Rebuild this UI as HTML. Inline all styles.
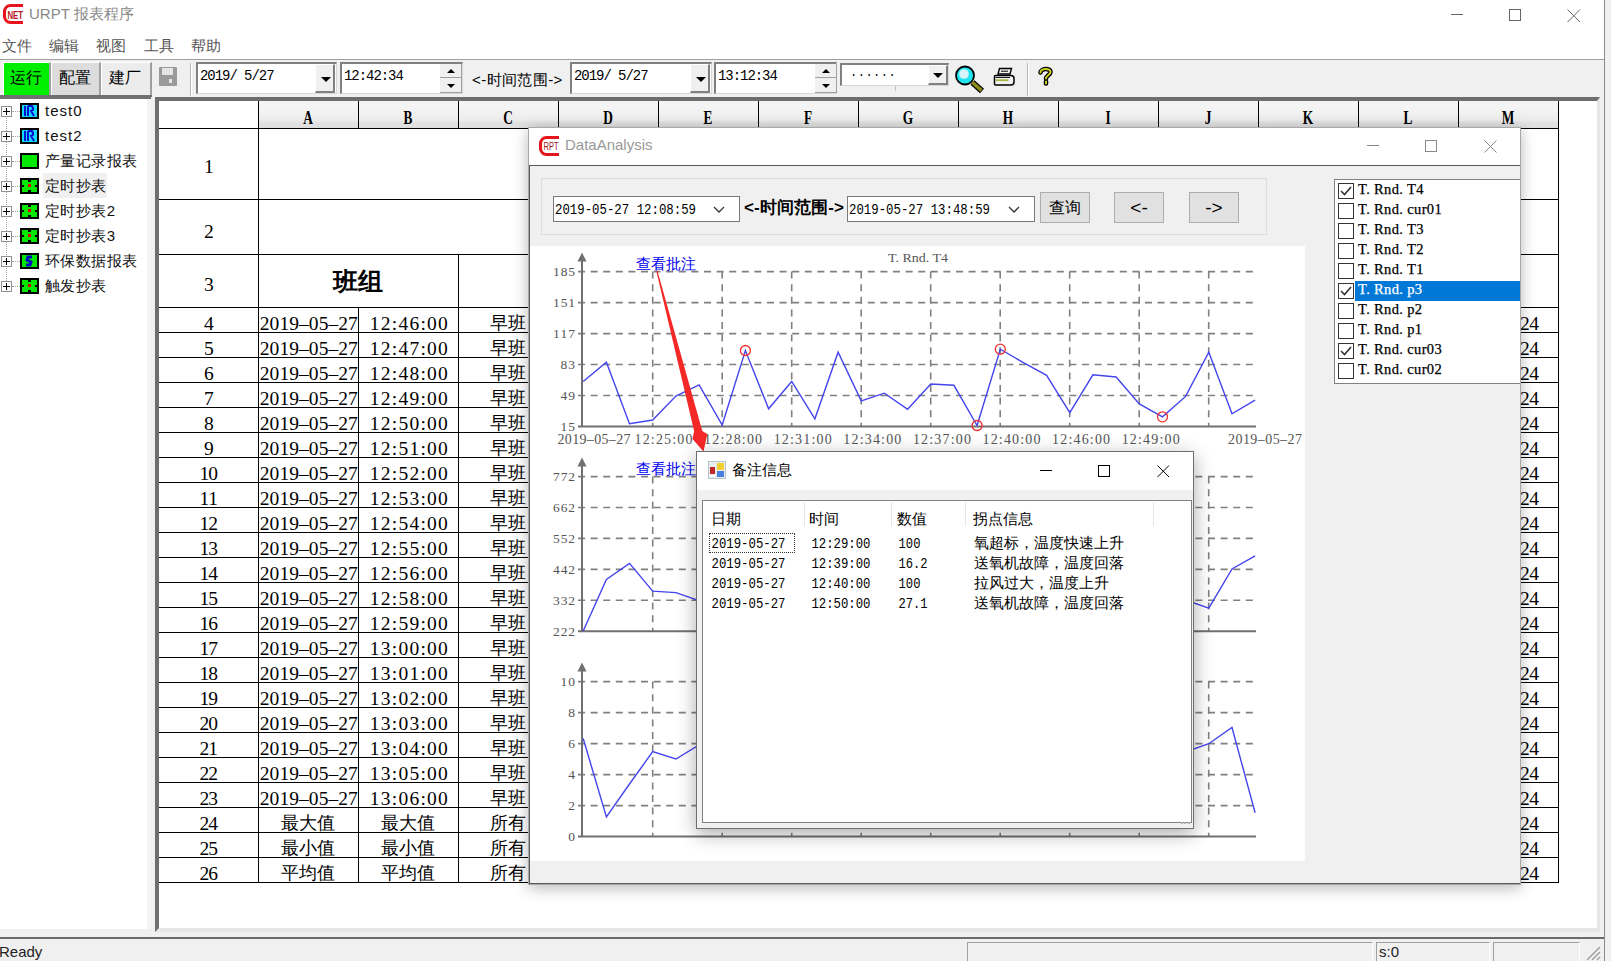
<!DOCTYPE html>
<html><head><meta charset="utf-8">
<style>
*{box-sizing:border-box;margin:0;padding:0}
html,body{width:1611px;height:961px;overflow:hidden;background:#fff;font-family:"Liberation Sans",sans-serif;color:#000}
.a{position:absolute}
.mono{font-family:"Liberation Mono",monospace}
.serif{font-family:"Liberation Serif",serif}
.hd{text-align:center;font-family:"Liberation Serif",serif;font-weight:bold;font-size:18px;line-height:22px;transform:scaleX(.74)}
.rn{text-align:center;font-family:"Liberation Mono",monospace;font-size:20px;line-height:22px;transform:scaleX(.84)}
.dt{text-align:center;font-family:"Liberation Mono",monospace;font-size:20px;line-height:22px;transform:scaleX(.845);white-space:nowrap}
.cj{text-align:center;font-size:18px;line-height:22px;white-space:nowrap}
</style></head><body>
<!-- outer desktop strip right -->
<div class="a" style="left:1604px;top:0;width:7px;height:961px;background:#f0f0f0;border-left:1px solid #8a8a8a"></div>

<!-- TITLE BAR -->
<div id="title" class="a" style="left:0;top:0;width:1604px;height:30px;background:#fff">
  <svg class="a" style="left:2px;top:3px" width="22" height="22" viewBox="0 0 22 22">
    <path d="M21 2.5H8.5A6 6 0 0 0 2.5 8.5V13.5A6 6 0 0 0 8.5 19.5H21" fill="none" stroke="#e8141c" stroke-width="3"/>
    <text x="5.5" y="15.5" font-family="Liberation Sans" font-weight="bold" font-size="11.5" fill="#b8141c" textLength="15.5" lengthAdjust="spacingAndGlyphs">NET</text>
  </svg>
  <div class="a" style="left:29px;top:5px;font-size:15px;color:#888;white-space:nowrap">URPT 报表程序</div>
  <div class="a" style="left:1451px;top:14px;width:12px;height:1px;background:#666"></div>
  <div class="a" style="left:1509px;top:9px;width:12px;height:12px;border:1px solid #666"></div>
  <svg class="a" style="left:1567px;top:9px" width="14" height="14"><path d="M0.5 0.5 L13 13 M13 0.5 L0.5 13" stroke="#666" stroke-width="1"/></svg>
</div>

<!-- MENU BAR -->
<div id="menu" class="a" style="left:0;top:30px;width:1604px;height:29px;background:#fff;font-size:15px;color:#555">
  <span class="a" style="left:2px;top:7px">文件</span>
  <span class="a" style="left:49px;top:7px">编辑</span>
  <span class="a" style="left:96px;top:7px">视图</span>
  <span class="a" style="left:144px;top:7px">工具</span>
  <span class="a" style="left:191px;top:7px">帮助</span>
</div>
<div class="a" style="left:0;top:59px;width:1604px;height:1px;background:#a0a0a0"></div>

<!-- TOOLBAR -->
<div id="toolbar" class="a" style="left:0;top:60px;width:1604px;height:37px;background:#f0f0f0">
  <!-- buttons -->
  <div class="a" style="left:3px;top:2px;width:48px;height:35px;background:#00ee00;border-right:2px solid #a0a0a0;border-bottom:2px solid #a0a0a0;border-top:1px solid #fff;border-left:1px solid #fff"></div>
  <div class="a" style="left:10px;top:8px;font-size:16px;white-space:nowrap">运行</div>
  <div class="a" style="left:51px;top:2px;width:50px;height:35px;background:#dcdcdc;border-right:2px solid #a0a0a0;border-bottom:2px solid #a0a0a0;border-top:1px solid #fff;border-left:1px solid #fff"></div>
  <div class="a" style="left:59px;top:8px;font-size:16px;white-space:nowrap">配置</div>
  <div class="a" style="left:101px;top:2px;width:51px;height:35px;background:#ececec;border-right:2px solid #a0a0a0;border-bottom:2px solid #a0a0a0;border-top:1px solid #fff;border-left:1px solid #fff"></div>
  <div class="a" style="left:109px;top:8px;font-size:16px;white-space:nowrap">建厂</div>
  <!-- save icon -->
  <svg class="a" style="left:159px;top:7px" width="18" height="19" viewBox="0 0 18 19">
    <rect x="0" y="0" width="18" height="19" rx="1" fill="#9a9a9a"/>
    <rect x="3" y="1" width="11" height="7" fill="#e4e4e4"/>
    <rect x="10" y="12" width="3" height="4" fill="#e4e4e4"/>
  </svg>
  <div class="a" style="left:190px;top:3px;width:2px;height:33px;border-left:1px solid #b8b8b8;border-right:1px solid #fff"></div>
  <!-- date1 -->
  <div class="a" style="left:196px;top:2px;width:141px;height:32px;background:#fff;border-top:2px solid #808080;border-left:2px solid #808080;border-right:1px solid #d8d8d8;border-bottom:1px solid #d8d8d8"></div>
  <div class="a mono" style="left:200px;top:8px;font-size:14px;letter-spacing:-1.05px;white-space:pre">2019/ 5/27</div>
  <div class="a" style="left:315px;top:4px;width:20px;height:29px;background:#f0f0f0;border-right:2px solid #808080;border-bottom:2px solid #808080;border-top:1px solid #fff;border-left:1px solid #fff"></div>
  <div class="a" style="left:321px;top:17px;width:0;height:0;border-left:5px solid transparent;border-right:5px solid transparent;border-top:5px solid #000"></div>
  <!-- time1 -->
  <div class="a" style="left:340px;top:2px;width:123px;height:32px;background:#fff;border-top:2px solid #808080;border-left:2px solid #808080;border-right:1px solid #d8d8d8;border-bottom:1px solid #d8d8d8"></div>
  <div class="a mono" style="left:344px;top:8px;font-size:14px;letter-spacing:-1.05px;white-space:pre">12:42:34</div>
  <div class="a" style="left:440px;top:4px;width:22px;height:14px;background:#f0f0f0;border-right:1px solid #a0a0a0;border-bottom:1px solid #a0a0a0"></div>
  <div class="a" style="left:440px;top:18px;width:22px;height:15px;background:#f0f0f0;border-right:1px solid #a0a0a0;border-bottom:1px solid #a0a0a0"></div>
  <div class="a" style="left:447px;top:9px;width:0;height:0;border-left:4px solid transparent;border-right:4px solid transparent;border-bottom:4px solid #000"></div>
  <div class="a" style="left:447px;top:24px;width:0;height:0;border-left:4px solid transparent;border-right:4px solid transparent;border-top:4px solid #000"></div>
  <!-- label -->
  <div class="a" style="left:472px;top:11px;font-size:15px;white-space:nowrap;letter-spacing:0.4px">&lt;-时间范围-&gt;</div>
  <!-- date2 -->
  <div class="a" style="left:570px;top:2px;width:142px;height:32px;background:#fff;border-top:2px solid #808080;border-left:2px solid #808080;border-right:1px solid #d8d8d8;border-bottom:1px solid #d8d8d8"></div>
  <div class="a mono" style="left:574px;top:8px;font-size:14px;letter-spacing:-1.05px;white-space:pre">2019/ 5/27</div>
  <div class="a" style="left:690px;top:4px;width:20px;height:29px;background:#f0f0f0;border-right:2px solid #808080;border-bottom:2px solid #808080;border-top:1px solid #fff;border-left:1px solid #fff"></div>
  <div class="a" style="left:696px;top:17px;width:0;height:0;border-left:5px solid transparent;border-right:5px solid transparent;border-top:5px solid #000"></div>
  <!-- time2 -->
  <div class="a" style="left:714px;top:2px;width:123px;height:32px;background:#fff;border-top:2px solid #808080;border-left:2px solid #808080;border-right:1px solid #d8d8d8;border-bottom:1px solid #d8d8d8"></div>
  <div class="a mono" style="left:718px;top:8px;font-size:14px;letter-spacing:-1.05px;white-space:pre">13:12:34</div>
  <div class="a" style="left:815px;top:4px;width:22px;height:14px;background:#f0f0f0;border-right:1px solid #a0a0a0;border-bottom:1px solid #a0a0a0"></div>
  <div class="a" style="left:815px;top:18px;width:22px;height:15px;background:#f0f0f0;border-right:1px solid #a0a0a0;border-bottom:1px solid #a0a0a0"></div>
  <div class="a" style="left:822px;top:9px;width:0;height:0;border-left:4px solid transparent;border-right:4px solid transparent;border-bottom:4px solid #000"></div>
  <div class="a" style="left:822px;top:24px;width:0;height:0;border-left:4px solid transparent;border-right:4px solid transparent;border-top:4px solid #000"></div>
  <!-- combo dots -->
  <div class="a" style="left:840px;top:3px;width:109px;height:23px;background:#fff;border-top:2px solid #808080;border-left:2px solid #808080;border-right:1px solid #d8d8d8;border-bottom:1px solid #d8d8d8"></div>
  <div class="a mono" style="left:850px;top:6px;font-size:12px;letter-spacing:0.5px;white-space:pre">......</div>
  <div class="a" style="left:928px;top:5px;width:20px;height:20px;background:#f0f0f0;border-right:2px solid #808080;border-bottom:2px solid #808080;border-top:1px solid #fff;border-left:1px solid #fff"></div>
  <div class="a" style="left:933px;top:13px;width:0;height:0;border-left:5px solid transparent;border-right:5px solid transparent;border-top:5px solid #000"></div>
  <div class="a" style="left:895px;top:26px;width:1px;height:5px;background:#c0c0c0"></div>
  <!-- magnifier -->
  <svg class="a" style="left:950px;top:0" width="70" height="36" viewBox="950 60 70 36">
    <path d="M972.5 82.5 L982 91" stroke="#000" stroke-width="6" stroke-linecap="butt"/>
    <path d="M972.5 82.5 L981.5 90.5" stroke="#8c8c18" stroke-width="3.6" stroke-linecap="butt"/>
    <circle cx="965" cy="75.5" r="9" fill="#20e4f0" stroke="#000" stroke-width="1.8"/>
    <circle cx="964" cy="74" r="4.8" fill="#d8f4f8"/>
    <path d="M999.5 68.5 H1011.5 L1010 74 H998 Z" fill="#f0f0f0" stroke="#000" stroke-width="1.4"/>
    <path d="M1001 71.2 H1008" stroke="#000" stroke-width="1"/>
    <path d="M995.5 75.5 H1011 Q1014 75.5 1014 78.5 V82 Q1014 85 1011 85 H995.5 Q994.5 85 994.5 84 V76.5 Q994.5 75.5 995.5 75.5 Z" fill="#f2f2f2" stroke="#000" stroke-width="1.5"/>
    <path d="M995.5 80.2 H1008.5" stroke="#a8b840" stroke-width="1.8"/>
    <path d="M995.5 77.5 H1010" stroke="#000" stroke-width="0.9"/>
  </svg>
  <div class="a" style="left:1027px;top:3px;width:2px;height:33px;border-left:1px solid #b8b8b8;border-right:1px solid #fff"></div>
  <!-- help -->
  <svg class="a" style="left:1037px;top:6px" width="17" height="20" viewBox="0 0 17 20">
    <path d="M3.5 6.5 C3.5 2.5 13.5 1.5 13.5 6 C13.5 9 9 9.5 9 12.5 M9 15.5 V17.5" fill="none" stroke="#000" stroke-width="4.6" stroke-linecap="round"/>
    <path d="M3.5 6.5 C3.5 2.5 13.5 1.5 13.5 6 C13.5 9 9 9.5 9 12.5 M9 15.5 V17.5" fill="none" stroke="#c8d020" stroke-width="2" stroke-linecap="round"/>
  </svg>
</div>
<div class="a" style="left:0;top:97px;width:1604px;height:2px;background:#707070"></div>

<!-- LEFT TREE -->
<!--TREE-->
<div class="a" style="left:0;top:99px;width:151px;height:839px;background:#fff"></div>
<div class="a" style="left:0;top:95px;width:152px;height:3px;background:#707070"></div>
<div class="a" style="left:147px;top:99px;width:5px;height:839px;background:#f4f4f4"></div>
<div class="a" style="left:6px;top:118px;width:0;height:163px;border-left:1px dotted #a0a0a0"></div>
<div class="a" style="left:1px;top:106px;width:11px;height:11px;border:1px solid #919191;background:#fff"></div>
<div class="a" style="left:3px;top:111px;width:7px;height:1px;background:#000"></div>
<div class="a" style="left:6px;top:108px;width:1px;height:7px;background:#000"></div>
<div class="a" style="left:12px;top:111px;width:8px;height:0;border-top:1px dotted #a0a0a0"></div>
<svg class="a" style="left:20px;top:103px" width="19" height="16"><rect width="19" height="16" fill="#000"/><rect x="2" y="2" width="15" height="12" fill="#10d8ff"/><path d="M5 3V13M8 3H12L13 5V7L11 8L14 13M8 3V13" stroke="#0010d0" stroke-width="2" fill="none"/></svg>
<div class="a" style="left:45px;top:101px;font-size:15px;line-height:20px;white-space:nowrap;color:#111;letter-spacing:1px">test0</div>
<div class="a" style="left:1px;top:131px;width:11px;height:11px;border:1px solid #919191;background:#fff"></div>
<div class="a" style="left:3px;top:136px;width:7px;height:1px;background:#000"></div>
<div class="a" style="left:6px;top:133px;width:1px;height:7px;background:#000"></div>
<div class="a" style="left:12px;top:136px;width:8px;height:0;border-top:1px dotted #a0a0a0"></div>
<svg class="a" style="left:20px;top:128px" width="19" height="16"><rect width="19" height="16" fill="#000"/><rect x="2" y="2" width="15" height="12" fill="#10d8ff"/><path d="M5 3V13M8 3H12L13 5V7L11 8L14 13M8 3V13" stroke="#0010d0" stroke-width="2" fill="none"/></svg>
<div class="a" style="left:45px;top:126px;font-size:15px;line-height:20px;white-space:nowrap;color:#111;letter-spacing:1px">test2</div>
<div class="a" style="left:1px;top:156px;width:11px;height:11px;border:1px solid #919191;background:#fff"></div>
<div class="a" style="left:3px;top:161px;width:7px;height:1px;background:#000"></div>
<div class="a" style="left:6px;top:158px;width:1px;height:7px;background:#000"></div>
<div class="a" style="left:12px;top:161px;width:8px;height:0;border-top:1px dotted #a0a0a0"></div>
<svg class="a" style="left:20px;top:153px" width="19" height="16"><rect width="19" height="16" fill="#000"/><rect x="2" y="2" width="15" height="12" fill="#00e800"/></svg>
<div class="a" style="left:45px;top:151px;font-size:15px;line-height:20px;white-space:nowrap;color:#111;letter-spacing:0.45px">产量记录报表</div>
<div class="a" style="left:43px;top:173px;width:64px;height:25px;background:#f0f0f0"></div>
<div class="a" style="left:1px;top:181px;width:11px;height:11px;border:1px solid #919191;background:#fff"></div>
<div class="a" style="left:3px;top:186px;width:7px;height:1px;background:#000"></div>
<div class="a" style="left:6px;top:183px;width:1px;height:7px;background:#000"></div>
<div class="a" style="left:12px;top:186px;width:8px;height:0;border-top:1px dotted #a0a0a0"></div>
<svg class="a" style="left:20px;top:178px" width="19" height="16"><rect width="19" height="16" fill="#000"/><rect x="2" y="2" width="15" height="12" fill="#00e800"/><rect x="8" y="2" width="3" height="2" fill="#000"/><rect x="8" y="12" width="3" height="2" fill="#000"/><rect x="2" y="7" width="2" height="2" fill="#000"/><rect x="15" y="7" width="2" height="2" fill="#000"/><rect x="8" y="6" width="3" height="3" fill="#e00000"/></svg>
<div class="a" style="left:45px;top:176px;font-size:15px;line-height:20px;white-space:nowrap;color:#111;letter-spacing:0.45px">定时抄表</div>
<div class="a" style="left:1px;top:206px;width:11px;height:11px;border:1px solid #919191;background:#fff"></div>
<div class="a" style="left:3px;top:211px;width:7px;height:1px;background:#000"></div>
<div class="a" style="left:6px;top:208px;width:1px;height:7px;background:#000"></div>
<div class="a" style="left:12px;top:211px;width:8px;height:0;border-top:1px dotted #a0a0a0"></div>
<svg class="a" style="left:20px;top:203px" width="19" height="16"><rect width="19" height="16" fill="#000"/><rect x="2" y="2" width="15" height="12" fill="#00e800"/><rect x="8" y="2" width="3" height="2" fill="#000"/><rect x="8" y="12" width="3" height="2" fill="#000"/><rect x="2" y="7" width="2" height="2" fill="#000"/><rect x="15" y="7" width="2" height="2" fill="#000"/><rect x="8" y="6" width="3" height="3" fill="#e00000"/></svg>
<div class="a" style="left:45px;top:201px;font-size:15px;line-height:20px;white-space:nowrap;color:#111;letter-spacing:0.45px">定时抄表2</div>
<div class="a" style="left:1px;top:231px;width:11px;height:11px;border:1px solid #919191;background:#fff"></div>
<div class="a" style="left:3px;top:236px;width:7px;height:1px;background:#000"></div>
<div class="a" style="left:6px;top:233px;width:1px;height:7px;background:#000"></div>
<div class="a" style="left:12px;top:236px;width:8px;height:0;border-top:1px dotted #a0a0a0"></div>
<svg class="a" style="left:20px;top:228px" width="19" height="16"><rect width="19" height="16" fill="#000"/><rect x="2" y="2" width="15" height="12" fill="#00e800"/><rect x="8" y="2" width="3" height="2" fill="#000"/><rect x="8" y="12" width="3" height="2" fill="#000"/><rect x="2" y="7" width="2" height="2" fill="#000"/><rect x="15" y="7" width="2" height="2" fill="#000"/><rect x="8" y="6" width="3" height="3" fill="#e00000"/></svg>
<div class="a" style="left:45px;top:226px;font-size:15px;line-height:20px;white-space:nowrap;color:#111;letter-spacing:0.45px">定时抄表3</div>
<div class="a" style="left:1px;top:256px;width:11px;height:11px;border:1px solid #919191;background:#fff"></div>
<div class="a" style="left:3px;top:261px;width:7px;height:1px;background:#000"></div>
<div class="a" style="left:6px;top:258px;width:1px;height:7px;background:#000"></div>
<div class="a" style="left:12px;top:261px;width:8px;height:0;border-top:1px dotted #a0a0a0"></div>
<svg class="a" style="left:20px;top:253px" width="19" height="16"><rect width="19" height="16" fill="#000"/><rect x="2" y="2" width="15" height="12" fill="#00e800"/><path d="M12 4H8L7 7L11 9L10 12H6" stroke="#0010c0" stroke-width="3" fill="none"/></svg>
<div class="a" style="left:45px;top:251px;font-size:15px;line-height:20px;white-space:nowrap;color:#111;letter-spacing:0.45px">环保数据报表</div>
<div class="a" style="left:1px;top:281px;width:11px;height:11px;border:1px solid #919191;background:#fff"></div>
<div class="a" style="left:3px;top:286px;width:7px;height:1px;background:#000"></div>
<div class="a" style="left:6px;top:283px;width:1px;height:7px;background:#000"></div>
<div class="a" style="left:12px;top:286px;width:8px;height:0;border-top:1px dotted #a0a0a0"></div>
<svg class="a" style="left:20px;top:278px" width="19" height="16"><rect width="19" height="16" fill="#000"/><rect x="2" y="2" width="15" height="12" fill="#00e800"/><rect x="8" y="2" width="3" height="2" fill="#000"/><rect x="8" y="12" width="3" height="2" fill="#000"/><rect x="2" y="7" width="2" height="2" fill="#000"/><rect x="15" y="7" width="2" height="2" fill="#000"/><rect x="8" y="6" width="3" height="3" fill="#e00000"/></svg>
<div class="a" style="left:45px;top:276px;font-size:15px;line-height:20px;white-space:nowrap;color:#111;letter-spacing:0.45px">触发抄表</div>
<!--/TREE-->

<!-- GRID -->
<!--GRID-->
<div class="a" style="left:151px;top:97px;width:1453px;height:841px;background:#f0f0f0"></div>
<div class="a" style="left:155px;top:97px;width:1445px;height:835px;background:#fff;border-top:4px solid #6e6e6e;border-left:4px solid #6e6e6e;border-right:3px solid #e6e6e6;border-bottom:4px solid #e6e6e6"></div>
<div class="a" style="left:259px;top:101px;width:99px;height:27px;background:linear-gradient(#f5f5f5 0%,#f3f3f3 35%,#ececec 70%,#e2e2e2 80%,#dedede 100%)"></div>
<div class="a" style="left:359px;top:101px;width:99px;height:27px;background:linear-gradient(#f5f5f5 0%,#f3f3f3 35%,#ececec 70%,#e2e2e2 80%,#dedede 100%)"></div>
<div class="a" style="left:459px;top:101px;width:99px;height:27px;background:linear-gradient(#f5f5f5 0%,#f3f3f3 35%,#ececec 70%,#e2e2e2 80%,#dedede 100%)"></div>
<div class="a" style="left:559px;top:101px;width:99px;height:27px;background:linear-gradient(#f5f5f5 0%,#f3f3f3 35%,#ececec 70%,#e2e2e2 80%,#dedede 100%)"></div>
<div class="a" style="left:659px;top:101px;width:99px;height:27px;background:linear-gradient(#f5f5f5 0%,#f3f3f3 35%,#ececec 70%,#e2e2e2 80%,#dedede 100%)"></div>
<div class="a" style="left:759px;top:101px;width:99px;height:27px;background:linear-gradient(#f5f5f5 0%,#f3f3f3 35%,#ececec 70%,#e2e2e2 80%,#dedede 100%)"></div>
<div class="a" style="left:859px;top:101px;width:99px;height:27px;background:linear-gradient(#f5f5f5 0%,#f3f3f3 35%,#ececec 70%,#e2e2e2 80%,#dedede 100%)"></div>
<div class="a" style="left:959px;top:101px;width:99px;height:27px;background:linear-gradient(#f5f5f5 0%,#f3f3f3 35%,#ececec 70%,#e2e2e2 80%,#dedede 100%)"></div>
<div class="a" style="left:1059px;top:101px;width:99px;height:27px;background:linear-gradient(#f5f5f5 0%,#f3f3f3 35%,#ececec 70%,#e2e2e2 80%,#dedede 100%)"></div>
<div class="a" style="left:1159px;top:101px;width:99px;height:27px;background:linear-gradient(#f5f5f5 0%,#f3f3f3 35%,#ececec 70%,#e2e2e2 80%,#dedede 100%)"></div>
<div class="a" style="left:1259px;top:101px;width:99px;height:27px;background:linear-gradient(#f5f5f5 0%,#f3f3f3 35%,#ececec 70%,#e2e2e2 80%,#dedede 100%)"></div>
<div class="a" style="left:1359px;top:101px;width:99px;height:27px;background:linear-gradient(#f5f5f5 0%,#f3f3f3 35%,#ececec 70%,#e2e2e2 80%,#dedede 100%)"></div>
<div class="a" style="left:1459px;top:101px;width:99px;height:27px;background:linear-gradient(#f5f5f5 0%,#f3f3f3 35%,#ececec 70%,#e2e2e2 80%,#dedede 100%)"></div>
<div class="a" style="left:159px;top:128px;width:1400px;height:1px;background:#000"></div>
<div class="a" style="left:159px;top:199px;width:1400px;height:1px;background:#000"></div>
<div class="a" style="left:159px;top:254px;width:1400px;height:1px;background:#000"></div>
<div class="a" style="left:159px;top:307px;width:1400px;height:1px;background:#000"></div>
<div class="a" style="left:159px;top:332px;width:1400px;height:1px;background:#000"></div>
<div class="a" style="left:159px;top:357px;width:1400px;height:1px;background:#000"></div>
<div class="a" style="left:159px;top:382px;width:1400px;height:1px;background:#000"></div>
<div class="a" style="left:159px;top:407px;width:1400px;height:1px;background:#000"></div>
<div class="a" style="left:159px;top:432px;width:1400px;height:1px;background:#000"></div>
<div class="a" style="left:159px;top:457px;width:1400px;height:1px;background:#000"></div>
<div class="a" style="left:159px;top:482px;width:1400px;height:1px;background:#000"></div>
<div class="a" style="left:159px;top:507px;width:1400px;height:1px;background:#000"></div>
<div class="a" style="left:159px;top:532px;width:1400px;height:1px;background:#000"></div>
<div class="a" style="left:159px;top:557px;width:1400px;height:1px;background:#000"></div>
<div class="a" style="left:159px;top:582px;width:1400px;height:1px;background:#000"></div>
<div class="a" style="left:159px;top:607px;width:1400px;height:1px;background:#000"></div>
<div class="a" style="left:159px;top:632px;width:1400px;height:1px;background:#000"></div>
<div class="a" style="left:159px;top:657px;width:1400px;height:1px;background:#000"></div>
<div class="a" style="left:159px;top:682px;width:1400px;height:1px;background:#000"></div>
<div class="a" style="left:159px;top:707px;width:1400px;height:1px;background:#000"></div>
<div class="a" style="left:159px;top:732px;width:1400px;height:1px;background:#000"></div>
<div class="a" style="left:159px;top:757px;width:1400px;height:1px;background:#000"></div>
<div class="a" style="left:159px;top:782px;width:1400px;height:1px;background:#000"></div>
<div class="a" style="left:159px;top:807px;width:1400px;height:1px;background:#000"></div>
<div class="a" style="left:159px;top:832px;width:1400px;height:1px;background:#000"></div>
<div class="a" style="left:159px;top:857px;width:1400px;height:1px;background:#000"></div>
<div class="a" style="left:159px;top:882px;width:1400px;height:1px;background:#000"></div>
<div class="a" style="left:258px;top:101px;width:1px;height:782px;background:#000"></div>
<div class="a" style="left:1558px;top:101px;width:1px;height:782px;background:#000"></div>
<div class="a" style="left:358px;top:101px;width:1px;height:28px;background:#000"></div>
<div class="a" style="left:358px;top:307px;width:1px;height:576px;background:#000"></div>
<div class="a" style="left:458px;top:101px;width:1px;height:28px;background:#000"></div>
<div class="a" style="left:458px;top:254px;width:1px;height:629px;background:#000"></div>
<div class="a" style="left:558px;top:101px;width:1px;height:28px;background:#000"></div>
<div class="a" style="left:558px;top:254px;width:1px;height:629px;background:#000"></div>
<div class="a" style="left:658px;top:101px;width:1px;height:28px;background:#000"></div>
<div class="a" style="left:658px;top:254px;width:1px;height:629px;background:#000"></div>
<div class="a" style="left:758px;top:101px;width:1px;height:28px;background:#000"></div>
<div class="a" style="left:758px;top:254px;width:1px;height:629px;background:#000"></div>
<div class="a" style="left:858px;top:101px;width:1px;height:28px;background:#000"></div>
<div class="a" style="left:858px;top:254px;width:1px;height:629px;background:#000"></div>
<div class="a" style="left:958px;top:101px;width:1px;height:28px;background:#000"></div>
<div class="a" style="left:958px;top:254px;width:1px;height:629px;background:#000"></div>
<div class="a" style="left:1058px;top:101px;width:1px;height:28px;background:#000"></div>
<div class="a" style="left:1058px;top:254px;width:1px;height:629px;background:#000"></div>
<div class="a" style="left:1158px;top:101px;width:1px;height:28px;background:#000"></div>
<div class="a" style="left:1158px;top:254px;width:1px;height:629px;background:#000"></div>
<div class="a" style="left:1258px;top:101px;width:1px;height:28px;background:#000"></div>
<div class="a" style="left:1258px;top:254px;width:1px;height:629px;background:#000"></div>
<div class="a" style="left:1358px;top:101px;width:1px;height:28px;background:#000"></div>
<div class="a" style="left:1358px;top:254px;width:1px;height:629px;background:#000"></div>
<div class="a" style="left:1458px;top:101px;width:1px;height:28px;background:#000"></div>
<div class="a" style="left:1458px;top:254px;width:1px;height:629px;background:#000"></div>
<div class="a hd" style="left:258px;top:107px;width:100px">A</div>
<div class="a hd" style="left:358px;top:107px;width:100px">B</div>
<div class="a hd" style="left:458px;top:107px;width:100px">C</div>
<div class="a hd" style="left:558px;top:107px;width:100px">D</div>
<div class="a hd" style="left:658px;top:107px;width:100px">E</div>
<div class="a hd" style="left:758px;top:107px;width:100px">F</div>
<div class="a hd" style="left:858px;top:107px;width:100px">G</div>
<div class="a hd" style="left:958px;top:107px;width:100px">H</div>
<div class="a hd" style="left:1058px;top:107px;width:100px">I</div>
<div class="a hd" style="left:1158px;top:107px;width:100px">J</div>
<div class="a hd" style="left:1258px;top:107px;width:100px">K</div>
<div class="a hd" style="left:1358px;top:107px;width:100px">L</div>
<div class="a hd" style="left:1458px;top:107px;width:100px">M</div>
<div class="a" style="left:258px;top:268px;width:200px;text-align:center;font-family:'Liberation Serif',serif;font-weight:bold;font-size:25px;line-height:28px">班组</div>
<div class="a cj" style="left:458px;top:312px;width:100px">早班</div>
<div class="a cj" style="left:458px;top:337px;width:100px">早班</div>
<div class="a cj" style="left:458px;top:362px;width:100px">早班</div>
<div class="a cj" style="left:458px;top:387px;width:100px">早班</div>
<div class="a cj" style="left:458px;top:412px;width:100px">早班</div>
<div class="a cj" style="left:458px;top:437px;width:100px">早班</div>
<div class="a cj" style="left:458px;top:462px;width:100px">早班</div>
<div class="a cj" style="left:458px;top:487px;width:100px">早班</div>
<div class="a cj" style="left:458px;top:512px;width:100px">早班</div>
<div class="a cj" style="left:458px;top:537px;width:100px">早班</div>
<div class="a cj" style="left:458px;top:562px;width:100px">早班</div>
<div class="a cj" style="left:458px;top:587px;width:100px">早班</div>
<div class="a cj" style="left:458px;top:612px;width:100px">早班</div>
<div class="a cj" style="left:458px;top:637px;width:100px">早班</div>
<div class="a cj" style="left:458px;top:662px;width:100px">早班</div>
<div class="a cj" style="left:458px;top:687px;width:100px">早班</div>
<div class="a cj" style="left:458px;top:712px;width:100px">早班</div>
<div class="a cj" style="left:458px;top:737px;width:100px">早班</div>
<div class="a cj" style="left:458px;top:762px;width:100px">早班</div>
<div class="a cj" style="left:458px;top:787px;width:100px">早班</div>
<div class="a cj" style="left:258px;top:812px;width:100px">最大值</div>
<div class="a cj" style="left:358px;top:812px;width:100px">最大值</div>
<div class="a cj" style="left:458px;top:812px;width:100px">所有</div>
<div class="a cj" style="left:258px;top:837px;width:100px">最小值</div>
<div class="a cj" style="left:358px;top:837px;width:100px">最小值</div>
<div class="a cj" style="left:458px;top:837px;width:100px">所有</div>
<div class="a cj" style="left:258px;top:862px;width:100px">平均值</div>
<div class="a cj" style="left:358px;top:862px;width:100px">平均值</div>
<div class="a cj" style="left:458px;top:862px;width:100px">所有</div>
<svg class="a" style="left:159px;top:101px" width="1400" height="782" viewBox="159 101 1400 782" font-family="Liberation Serif" font-size="19.5" fill="#000">
<text x="208.8" y="173" text-anchor="middle" textLength="9.3" lengthAdjust="spacing">1</text>
<text x="208.8" y="237.5" text-anchor="middle" textLength="9.3" lengthAdjust="spacing">2</text>
<text x="208.8" y="290.5" text-anchor="middle" textLength="9.3" lengthAdjust="spacing">3</text>
<text x="208.8" y="329.5" text-anchor="middle" textLength="9.3" lengthAdjust="spacing">4</text>
<text x="208.8" y="354.5" text-anchor="middle" textLength="9.3" lengthAdjust="spacing">5</text>
<text x="208.8" y="379.5" text-anchor="middle" textLength="9.3" lengthAdjust="spacing">6</text>
<text x="208.8" y="404.5" text-anchor="middle" textLength="9.3" lengthAdjust="spacing">7</text>
<text x="208.8" y="429.5" text-anchor="middle" textLength="9.3" lengthAdjust="spacing">8</text>
<text x="208.8" y="454.5" text-anchor="middle" textLength="9.3" lengthAdjust="spacing">9</text>
<text x="208.8" y="479.5" text-anchor="middle" textLength="18.6" lengthAdjust="spacing">10</text>
<text x="208.8" y="504.5" text-anchor="middle" textLength="18.6" lengthAdjust="spacing">11</text>
<text x="208.8" y="529.5" text-anchor="middle" textLength="18.6" lengthAdjust="spacing">12</text>
<text x="208.8" y="554.5" text-anchor="middle" textLength="18.6" lengthAdjust="spacing">13</text>
<text x="208.8" y="579.5" text-anchor="middle" textLength="18.6" lengthAdjust="spacing">14</text>
<text x="208.8" y="604.5" text-anchor="middle" textLength="18.6" lengthAdjust="spacing">15</text>
<text x="208.8" y="629.5" text-anchor="middle" textLength="18.6" lengthAdjust="spacing">16</text>
<text x="208.8" y="654.5" text-anchor="middle" textLength="18.6" lengthAdjust="spacing">17</text>
<text x="208.8" y="679.5" text-anchor="middle" textLength="18.6" lengthAdjust="spacing">18</text>
<text x="208.8" y="704.5" text-anchor="middle" textLength="18.6" lengthAdjust="spacing">19</text>
<text x="208.8" y="729.5" text-anchor="middle" textLength="18.6" lengthAdjust="spacing">20</text>
<text x="208.8" y="754.5" text-anchor="middle" textLength="18.6" lengthAdjust="spacing">21</text>
<text x="208.8" y="779.5" text-anchor="middle" textLength="18.6" lengthAdjust="spacing">22</text>
<text x="208.8" y="804.5" text-anchor="middle" textLength="18.6" lengthAdjust="spacing">23</text>
<text x="208.8" y="829.5" text-anchor="middle" textLength="18.6" lengthAdjust="spacing">24</text>
<text x="208.8" y="854.5" text-anchor="middle" textLength="18.6" lengthAdjust="spacing">25</text>
<text x="208.8" y="879.5" text-anchor="middle" textLength="18.6" lengthAdjust="spacing">26</text>
<text x="259.8" y="329.5" textLength="98" lengthAdjust="spacing">2019–05–27</text>
<text x="369.8" y="329.5" textLength="78" lengthAdjust="spacing">12:46:00</text>
<text x="1520" y="329.5" textLength="19" lengthAdjust="spacing">24</text>
<text x="259.8" y="354.5" textLength="98" lengthAdjust="spacing">2019–05–27</text>
<text x="369.8" y="354.5" textLength="78" lengthAdjust="spacing">12:47:00</text>
<text x="1520" y="354.5" textLength="19" lengthAdjust="spacing">24</text>
<text x="259.8" y="379.5" textLength="98" lengthAdjust="spacing">2019–05–27</text>
<text x="369.8" y="379.5" textLength="78" lengthAdjust="spacing">12:48:00</text>
<text x="1520" y="379.5" textLength="19" lengthAdjust="spacing">24</text>
<text x="259.8" y="404.5" textLength="98" lengthAdjust="spacing">2019–05–27</text>
<text x="369.8" y="404.5" textLength="78" lengthAdjust="spacing">12:49:00</text>
<text x="1520" y="404.5" textLength="19" lengthAdjust="spacing">24</text>
<text x="259.8" y="429.5" textLength="98" lengthAdjust="spacing">2019–05–27</text>
<text x="369.8" y="429.5" textLength="78" lengthAdjust="spacing">12:50:00</text>
<text x="1520" y="429.5" textLength="19" lengthAdjust="spacing">24</text>
<text x="259.8" y="454.5" textLength="98" lengthAdjust="spacing">2019–05–27</text>
<text x="369.8" y="454.5" textLength="78" lengthAdjust="spacing">12:51:00</text>
<text x="1520" y="454.5" textLength="19" lengthAdjust="spacing">24</text>
<text x="259.8" y="479.5" textLength="98" lengthAdjust="spacing">2019–05–27</text>
<text x="369.8" y="479.5" textLength="78" lengthAdjust="spacing">12:52:00</text>
<text x="1520" y="479.5" textLength="19" lengthAdjust="spacing">24</text>
<text x="259.8" y="504.5" textLength="98" lengthAdjust="spacing">2019–05–27</text>
<text x="369.8" y="504.5" textLength="78" lengthAdjust="spacing">12:53:00</text>
<text x="1520" y="504.5" textLength="19" lengthAdjust="spacing">24</text>
<text x="259.8" y="529.5" textLength="98" lengthAdjust="spacing">2019–05–27</text>
<text x="369.8" y="529.5" textLength="78" lengthAdjust="spacing">12:54:00</text>
<text x="1520" y="529.5" textLength="19" lengthAdjust="spacing">24</text>
<text x="259.8" y="554.5" textLength="98" lengthAdjust="spacing">2019–05–27</text>
<text x="369.8" y="554.5" textLength="78" lengthAdjust="spacing">12:55:00</text>
<text x="1520" y="554.5" textLength="19" lengthAdjust="spacing">24</text>
<text x="259.8" y="579.5" textLength="98" lengthAdjust="spacing">2019–05–27</text>
<text x="369.8" y="579.5" textLength="78" lengthAdjust="spacing">12:56:00</text>
<text x="1520" y="579.5" textLength="19" lengthAdjust="spacing">24</text>
<text x="259.8" y="604.5" textLength="98" lengthAdjust="spacing">2019–05–27</text>
<text x="369.8" y="604.5" textLength="78" lengthAdjust="spacing">12:58:00</text>
<text x="1520" y="604.5" textLength="19" lengthAdjust="spacing">24</text>
<text x="259.8" y="629.5" textLength="98" lengthAdjust="spacing">2019–05–27</text>
<text x="369.8" y="629.5" textLength="78" lengthAdjust="spacing">12:59:00</text>
<text x="1520" y="629.5" textLength="19" lengthAdjust="spacing">24</text>
<text x="259.8" y="654.5" textLength="98" lengthAdjust="spacing">2019–05–27</text>
<text x="369.8" y="654.5" textLength="78" lengthAdjust="spacing">13:00:00</text>
<text x="1520" y="654.5" textLength="19" lengthAdjust="spacing">24</text>
<text x="259.8" y="679.5" textLength="98" lengthAdjust="spacing">2019–05–27</text>
<text x="369.8" y="679.5" textLength="78" lengthAdjust="spacing">13:01:00</text>
<text x="1520" y="679.5" textLength="19" lengthAdjust="spacing">24</text>
<text x="259.8" y="704.5" textLength="98" lengthAdjust="spacing">2019–05–27</text>
<text x="369.8" y="704.5" textLength="78" lengthAdjust="spacing">13:02:00</text>
<text x="1520" y="704.5" textLength="19" lengthAdjust="spacing">24</text>
<text x="259.8" y="729.5" textLength="98" lengthAdjust="spacing">2019–05–27</text>
<text x="369.8" y="729.5" textLength="78" lengthAdjust="spacing">13:03:00</text>
<text x="1520" y="729.5" textLength="19" lengthAdjust="spacing">24</text>
<text x="259.8" y="754.5" textLength="98" lengthAdjust="spacing">2019–05–27</text>
<text x="369.8" y="754.5" textLength="78" lengthAdjust="spacing">13:04:00</text>
<text x="1520" y="754.5" textLength="19" lengthAdjust="spacing">24</text>
<text x="259.8" y="779.5" textLength="98" lengthAdjust="spacing">2019–05–27</text>
<text x="369.8" y="779.5" textLength="78" lengthAdjust="spacing">13:05:00</text>
<text x="1520" y="779.5" textLength="19" lengthAdjust="spacing">24</text>
<text x="259.8" y="804.5" textLength="98" lengthAdjust="spacing">2019–05–27</text>
<text x="369.8" y="804.5" textLength="78" lengthAdjust="spacing">13:06:00</text>
<text x="1520" y="804.5" textLength="19" lengthAdjust="spacing">24</text>
<text x="1520" y="829.5" textLength="19" lengthAdjust="spacing">24</text>
<text x="1520" y="854.5" textLength="19" lengthAdjust="spacing">24</text>
<text x="1520" y="879.5" textLength="19" lengthAdjust="spacing">24</text>
</svg>
<!--/GRID-->

<!-- DATA ANALYSIS -->
<!--DA-->
<div class="a" style="left:528px;top:127px;width:993px;height:758px;background:#fff;border:1px solid #a8a8a8;box-shadow:0 3px 14px rgba(0,0,0,.28)"></div>
<svg class="a" style="left:539px;top:136px" width="21" height="20" viewBox="0 0 21 20"><path d="M20 1.5H7.5A6 6 0 0 0 1.5 7.5V12.5A6 6 0 0 0 7.5 18.5H20" fill="none" stroke="#e3141a" stroke-width="3"/><text x="4.5" y="14" font-family="Liberation Sans" font-size="11" fill="#a01018" textLength="15" lengthAdjust="spacingAndGlyphs">RPT</text></svg>
<div class="a" style="left:565px;top:136px;font-size:15px;line-height:18px;color:#999;white-space:nowrap">DataAnalysis</div>
<div class="a" style="left:1367px;top:145px;width:12px;height:1px;background:#888"></div>
<div class="a" style="left:1425px;top:140px;width:12px;height:12px;border:1px solid #888"></div>
<svg class="a" style="left:1484px;top:140px" width="13" height="13"><path d="M0.5 0.5L12.5 12.5M12.5 0.5L0.5 12.5" stroke="#888" stroke-width="1"/></svg>
<div class="a" style="left:529px;top:165px;width:991px;height:719px;background:#f0f0f0;border:1px solid #5a5a5a;border-right:none"></div>
<div class="a" style="left:541px;top:178px;width:726px;height:57px;border:1px solid #dcdcdc"></div>
<div class="a" style="left:553px;top:196px;width:187px;height:26px;background:#fff;border:1px solid #7a7a7a"></div>
<svg class="a" style="left:553px;top:196px" width="187" height="26"><text x="2" y="18" font-family="Liberation Mono" font-size="15" textLength="141" lengthAdjust="spacingAndGlyphs" fill="#000">2019-05-27 12:08:59</text><path d="M161 11L166 16L171 11" fill="none" stroke="#333" stroke-width="1.3"/></svg>
<div class="a" style="left:847px;top:196px;width:188px;height:26px;background:#fff;border:1px solid #7a7a7a"></div>
<svg class="a" style="left:847px;top:196px" width="188" height="26"><text x="2" y="18" font-family="Liberation Mono" font-size="15" textLength="141" lengthAdjust="spacingAndGlyphs" fill="#000">2019-05-27 13:48:59</text><path d="M162 11L167 16L172 11" fill="none" stroke="#333" stroke-width="1.3"/></svg>
<div class="a" style="left:744px;top:199px;font-size:17px;font-weight:bold;line-height:18px;white-space:nowrap;letter-spacing:0.1px">&lt;-时间范围-&gt;</div>
<div class="a" style="left:1040px;top:192px;width:50px;height:31px;background:#e1e1e1;border:1px solid #adadad;font-size:16px;line-height:30px;text-align:center">查询</div>
<div class="a" style="left:1114px;top:192px;width:50px;height:31px;background:#e1e1e1;border:1px solid #adadad;font-size:19px;line-height:30px;text-align:center">&lt;-</div>
<div class="a" style="left:1189px;top:192px;width:50px;height:31px;background:#e1e1e1;border:1px solid #adadad;font-size:19px;line-height:30px;text-align:center">-&gt;</div>
<div class="a" style="left:1334px;top:179px;width:186px;height:205px;background:#fff;border:1px solid #828282;border-right:none"></div>
<div class="a" style="left:1338px;top:183px;width:16px;height:16px;border:1px solid #333;background:#fff"></div>
<svg class="a" style="left:1338px;top:183px" width="16" height="16"><path d="M3 8L6.5 11.5L13 4" fill="none" stroke="#333" stroke-width="1.6"/></svg>
<div class="a" style="left:1358px;top:180px;font-family:'Liberation Serif',serif;font-size:14.5px;line-height:18px;color:#000;white-space:pre;letter-spacing:0.35px;-webkit-text-stroke:0.25px #000">T. Rnd. T4</div>
<div class="a" style="left:1338px;top:203px;width:16px;height:16px;border:1px solid #333;background:#fff"></div>
<div class="a" style="left:1358px;top:200px;font-family:'Liberation Serif',serif;font-size:14.5px;line-height:18px;color:#000;white-space:pre;letter-spacing:0.35px;-webkit-text-stroke:0.25px #000">T. Rnd. cur01</div>
<div class="a" style="left:1338px;top:223px;width:16px;height:16px;border:1px solid #333;background:#fff"></div>
<div class="a" style="left:1358px;top:220px;font-family:'Liberation Serif',serif;font-size:14.5px;line-height:18px;color:#000;white-space:pre;letter-spacing:0.35px;-webkit-text-stroke:0.25px #000">T. Rnd. T3</div>
<div class="a" style="left:1338px;top:243px;width:16px;height:16px;border:1px solid #333;background:#fff"></div>
<div class="a" style="left:1358px;top:240px;font-family:'Liberation Serif',serif;font-size:14.5px;line-height:18px;color:#000;white-space:pre;letter-spacing:0.35px;-webkit-text-stroke:0.25px #000">T. Rnd. T2</div>
<div class="a" style="left:1338px;top:263px;width:16px;height:16px;border:1px solid #333;background:#fff"></div>
<div class="a" style="left:1358px;top:260px;font-family:'Liberation Serif',serif;font-size:14.5px;line-height:18px;color:#000;white-space:pre;letter-spacing:0.35px;-webkit-text-stroke:0.25px #000">T. Rnd. T1</div>
<div class="a" style="left:1355px;top:281px;width:165px;height:20px;background:#0078d7"></div>
<div class="a" style="left:1338px;top:283px;width:16px;height:16px;border:1px solid #333;background:#fff"></div>
<svg class="a" style="left:1338px;top:283px" width="16" height="16"><path d="M3 8L6.5 11.5L13 4" fill="none" stroke="#333" stroke-width="1.6"/></svg>
<div class="a" style="left:1358px;top:280px;font-family:'Liberation Serif',serif;font-size:14.5px;line-height:18px;color:#fff;white-space:pre;letter-spacing:0.35px;-webkit-text-stroke:0.25px #fff">T. Rnd. p3</div>
<div class="a" style="left:1338px;top:303px;width:16px;height:16px;border:1px solid #333;background:#fff"></div>
<div class="a" style="left:1358px;top:300px;font-family:'Liberation Serif',serif;font-size:14.5px;line-height:18px;color:#000;white-space:pre;letter-spacing:0.35px;-webkit-text-stroke:0.25px #000">T. Rnd. p2</div>
<div class="a" style="left:1338px;top:323px;width:16px;height:16px;border:1px solid #333;background:#fff"></div>
<div class="a" style="left:1358px;top:320px;font-family:'Liberation Serif',serif;font-size:14.5px;line-height:18px;color:#000;white-space:pre;letter-spacing:0.35px;-webkit-text-stroke:0.25px #000">T. Rnd. p1</div>
<div class="a" style="left:1338px;top:343px;width:16px;height:16px;border:1px solid #333;background:#fff"></div>
<svg class="a" style="left:1338px;top:343px" width="16" height="16"><path d="M3 8L6.5 11.5L13 4" fill="none" stroke="#333" stroke-width="1.6"/></svg>
<div class="a" style="left:1358px;top:340px;font-family:'Liberation Serif',serif;font-size:14.5px;line-height:18px;color:#000;white-space:pre;letter-spacing:0.35px;-webkit-text-stroke:0.25px #000">T. Rnd. cur03</div>
<div class="a" style="left:1338px;top:363px;width:16px;height:16px;border:1px solid #333;background:#fff"></div>
<div class="a" style="left:1358px;top:360px;font-family:'Liberation Serif',serif;font-size:14.5px;line-height:18px;color:#000;white-space:pre;letter-spacing:0.35px;-webkit-text-stroke:0.25px #000">T. Rnd. cur02</div>
<div class="a" style="left:530px;top:246px;width:775px;height:615px;background:#fff"></div>
<svg class="a" style="left:530px;top:246px" width="775" height="615" viewBox="530 246 775 615">
<line x1="578" y1="271.6" x2="1253" y2="271.6" stroke="#808080" stroke-width="1.6" stroke-dasharray="7 5.6"/>
<line x1="578" y1="302.6" x2="1253" y2="302.6" stroke="#808080" stroke-width="1.6" stroke-dasharray="7 5.6"/>
<line x1="578" y1="333.6" x2="1253" y2="333.6" stroke="#808080" stroke-width="1.6" stroke-dasharray="7 5.6"/>
<line x1="578" y1="364.5" x2="1253" y2="364.5" stroke="#808080" stroke-width="1.6" stroke-dasharray="7 5.6"/>
<line x1="578" y1="395.5" x2="1253" y2="395.5" stroke="#808080" stroke-width="1.6" stroke-dasharray="7 5.6"/>
<line x1="652.7" y1="271.6" x2="652.7" y2="426.5" stroke="#808080" stroke-width="1.6" stroke-dasharray="7 5.6"/>
<line x1="722.2" y1="271.6" x2="722.2" y2="426.5" stroke="#808080" stroke-width="1.6" stroke-dasharray="7 5.6"/>
<line x1="791.7" y1="271.6" x2="791.7" y2="426.5" stroke="#808080" stroke-width="1.6" stroke-dasharray="7 5.6"/>
<line x1="861.2" y1="271.6" x2="861.2" y2="426.5" stroke="#808080" stroke-width="1.6" stroke-dasharray="7 5.6"/>
<line x1="930.7" y1="271.6" x2="930.7" y2="426.5" stroke="#808080" stroke-width="1.6" stroke-dasharray="7 5.6"/>
<line x1="1000.2" y1="271.6" x2="1000.2" y2="426.5" stroke="#808080" stroke-width="1.6" stroke-dasharray="7 5.6"/>
<line x1="1069.7" y1="271.6" x2="1069.7" y2="426.5" stroke="#808080" stroke-width="1.6" stroke-dasharray="7 5.6"/>
<line x1="1139.2" y1="271.6" x2="1139.2" y2="426.5" stroke="#808080" stroke-width="1.6" stroke-dasharray="7 5.6"/>
<line x1="1208.7" y1="271.6" x2="1208.7" y2="426.5" stroke="#808080" stroke-width="1.6" stroke-dasharray="7 5.6"/>
<line x1="582" y1="258.6" x2="582" y2="426.5" stroke="#707070" stroke-width="2"/>
<line x1="578" y1="426.5" x2="1256" y2="426.5" stroke="#707070" stroke-width="2"/>
<path d="M582 252.60000000000002L586.5 261.6L577.5 261.6Z" fill="#707070"/>
<text x="575" y="276.1" text-anchor="end" font-family="Liberation Serif" font-size="13.5" fill="#555" textLength="21.9" lengthAdjust="spacing">185</text>
<text x="575" y="307.1" text-anchor="end" font-family="Liberation Serif" font-size="13.5" fill="#555" textLength="21.9" lengthAdjust="spacing">151</text>
<text x="575" y="338.1" text-anchor="end" font-family="Liberation Serif" font-size="13.5" fill="#555" textLength="21.9" lengthAdjust="spacing">117</text>
<text x="575" y="369.0" text-anchor="end" font-family="Liberation Serif" font-size="13.5" fill="#555" textLength="14.6" lengthAdjust="spacing">83</text>
<text x="575" y="400.0" text-anchor="end" font-family="Liberation Serif" font-size="13.5" fill="#555" textLength="14.6" lengthAdjust="spacing">49</text>
<text x="575" y="431.0" text-anchor="end" font-family="Liberation Serif" font-size="13.5" fill="#555" textLength="14.6" lengthAdjust="spacing">15</text>
<polyline points="583.2,381.5 606.4,362.2 629.5,423.7 652.7,420.0 675.9,396.0 699.1,384.8 722.2,425.0 745.4,350.5 768.6,408.8 791.7,381.5 814.9,418.8 838.1,352.2 861.2,400.9 884.4,393.2 907.6,409.3 930.8,384.0 953.9,385.3 977.1,425.5 1000.3,349.2 1023.4,362.7 1046.6,375.3 1069.8,412.6 1092.9,374.8 1116.1,377.0 1139.3,403.9 1162.5,416.8 1185.6,396.4 1208.8,352.2 1232.0,413.8 1255.1,400.1" fill="none" stroke="#4545ee" stroke-width="1.4"/>
<circle cx="745.4" cy="350.5" r="5" fill="none" stroke="#f03030" stroke-width="1.3"/>
<circle cx="977.1" cy="425.5" r="5" fill="none" stroke="#f03030" stroke-width="1.3"/>
<circle cx="1000.3" cy="349.2" r="5" fill="none" stroke="#f03030" stroke-width="1.3"/>
<circle cx="1162.5" cy="416.8" r="5" fill="none" stroke="#f03030" stroke-width="1.3"/>
<text x="557.5" y="443.5" font-family="Liberation Serif" font-size="14" fill="#555" textLength="73" lengthAdjust="spacing">2019–05–27</text>
<text x="634.5" y="443.5" font-family="Liberation Serif" font-size="14" fill="#555" textLength="58" lengthAdjust="spacing">12:25:00</text>
<text x="704.1" y="443.5" font-family="Liberation Serif" font-size="14" fill="#555" textLength="58" lengthAdjust="spacing">12:28:00</text>
<text x="773.7" y="443.5" font-family="Liberation Serif" font-size="14" fill="#555" textLength="58" lengthAdjust="spacing">12:31:00</text>
<text x="843.3" y="443.5" font-family="Liberation Serif" font-size="14" fill="#555" textLength="58" lengthAdjust="spacing">12:34:00</text>
<text x="912.9" y="443.5" font-family="Liberation Serif" font-size="14" fill="#555" textLength="58" lengthAdjust="spacing">12:37:00</text>
<text x="982.5" y="443.5" font-family="Liberation Serif" font-size="14" fill="#555" textLength="58" lengthAdjust="spacing">12:40:00</text>
<text x="1052.1" y="443.5" font-family="Liberation Serif" font-size="14" fill="#555" textLength="58" lengthAdjust="spacing">12:46:00</text>
<text x="1121.7" y="443.5" font-family="Liberation Serif" font-size="14" fill="#555" textLength="58" lengthAdjust="spacing">12:49:00</text>
<text x="1228" y="443.5" font-family="Liberation Serif" font-size="14" fill="#555" textLength="74" lengthAdjust="spacing">2019–05–27</text>
<line x1="578" y1="476.6" x2="1253" y2="476.6" stroke="#808080" stroke-width="1.6" stroke-dasharray="7 5.6"/>
<line x1="578" y1="507.5" x2="1253" y2="507.5" stroke="#808080" stroke-width="1.6" stroke-dasharray="7 5.6"/>
<line x1="578" y1="538.4" x2="1253" y2="538.4" stroke="#808080" stroke-width="1.6" stroke-dasharray="7 5.6"/>
<line x1="578" y1="569.4" x2="1253" y2="569.4" stroke="#808080" stroke-width="1.6" stroke-dasharray="7 5.6"/>
<line x1="578" y1="600.3" x2="1253" y2="600.3" stroke="#808080" stroke-width="1.6" stroke-dasharray="7 5.6"/>
<line x1="652.7" y1="476.6" x2="652.7" y2="631.2" stroke="#808080" stroke-width="1.6" stroke-dasharray="7 5.6"/>
<line x1="722.2" y1="476.6" x2="722.2" y2="631.2" stroke="#808080" stroke-width="1.6" stroke-dasharray="7 5.6"/>
<line x1="791.7" y1="476.6" x2="791.7" y2="631.2" stroke="#808080" stroke-width="1.6" stroke-dasharray="7 5.6"/>
<line x1="861.2" y1="476.6" x2="861.2" y2="631.2" stroke="#808080" stroke-width="1.6" stroke-dasharray="7 5.6"/>
<line x1="930.7" y1="476.6" x2="930.7" y2="631.2" stroke="#808080" stroke-width="1.6" stroke-dasharray="7 5.6"/>
<line x1="1000.2" y1="476.6" x2="1000.2" y2="631.2" stroke="#808080" stroke-width="1.6" stroke-dasharray="7 5.6"/>
<line x1="1069.7" y1="476.6" x2="1069.7" y2="631.2" stroke="#808080" stroke-width="1.6" stroke-dasharray="7 5.6"/>
<line x1="1139.2" y1="476.6" x2="1139.2" y2="631.2" stroke="#808080" stroke-width="1.6" stroke-dasharray="7 5.6"/>
<line x1="1208.7" y1="476.6" x2="1208.7" y2="631.2" stroke="#808080" stroke-width="1.6" stroke-dasharray="7 5.6"/>
<line x1="582" y1="463.6" x2="582" y2="631.2" stroke="#707070" stroke-width="2"/>
<line x1="578" y1="631.2" x2="1256" y2="631.2" stroke="#707070" stroke-width="2"/>
<path d="M582 457.6L586.5 466.6L577.5 466.6Z" fill="#707070"/>
<text x="575" y="481.1" text-anchor="end" font-family="Liberation Serif" font-size="13.5" fill="#555" textLength="21.9" lengthAdjust="spacing">772</text>
<text x="575" y="512.0" text-anchor="end" font-family="Liberation Serif" font-size="13.5" fill="#555" textLength="21.9" lengthAdjust="spacing">662</text>
<text x="575" y="542.9" text-anchor="end" font-family="Liberation Serif" font-size="13.5" fill="#555" textLength="21.9" lengthAdjust="spacing">552</text>
<text x="575" y="573.9" text-anchor="end" font-family="Liberation Serif" font-size="13.5" fill="#555" textLength="21.9" lengthAdjust="spacing">442</text>
<text x="575" y="604.8" text-anchor="end" font-family="Liberation Serif" font-size="13.5" fill="#555" textLength="21.9" lengthAdjust="spacing">332</text>
<text x="575" y="635.7" text-anchor="end" font-family="Liberation Serif" font-size="13.5" fill="#555" textLength="21.9" lengthAdjust="spacing">222</text>
<polyline points="583.2,631.0 606.4,579.4 629.5,563.4 652.7,591.1 675.9,592.6 699.1,600.7 722.2,575.5 745.4,595.4 768.6,584.0 791.7,599.3 814.9,600.7 838.1,564.3 861.2,560.9 884.4,614.4 907.6,576.9 930.8,575.2 953.9,624.7 977.1,590.6 1000.3,614.4 1023.4,591.0 1046.6,601.5 1069.8,569.8 1092.9,601.3 1116.1,616.4 1139.3,594.0 1162.5,608.2 1185.6,600.0 1208.8,608.2 1232.0,568.9 1255.1,555.8" fill="none" stroke="#4545ee" stroke-width="1.4"/>
<line x1="578" y1="681.6" x2="1253" y2="681.6" stroke="#808080" stroke-width="1.6" stroke-dasharray="7 5.6"/>
<line x1="578" y1="712.6" x2="1253" y2="712.6" stroke="#808080" stroke-width="1.6" stroke-dasharray="7 5.6"/>
<line x1="578" y1="743.6" x2="1253" y2="743.6" stroke="#808080" stroke-width="1.6" stroke-dasharray="7 5.6"/>
<line x1="578" y1="774.6" x2="1253" y2="774.6" stroke="#808080" stroke-width="1.6" stroke-dasharray="7 5.6"/>
<line x1="578" y1="805.6" x2="1253" y2="805.6" stroke="#808080" stroke-width="1.6" stroke-dasharray="7 5.6"/>
<line x1="652.7" y1="681.6" x2="652.7" y2="836.6" stroke="#808080" stroke-width="1.6" stroke-dasharray="7 5.6"/>
<line x1="722.2" y1="681.6" x2="722.2" y2="836.6" stroke="#808080" stroke-width="1.6" stroke-dasharray="7 5.6"/>
<line x1="791.7" y1="681.6" x2="791.7" y2="836.6" stroke="#808080" stroke-width="1.6" stroke-dasharray="7 5.6"/>
<line x1="861.2" y1="681.6" x2="861.2" y2="836.6" stroke="#808080" stroke-width="1.6" stroke-dasharray="7 5.6"/>
<line x1="930.7" y1="681.6" x2="930.7" y2="836.6" stroke="#808080" stroke-width="1.6" stroke-dasharray="7 5.6"/>
<line x1="1000.2" y1="681.6" x2="1000.2" y2="836.6" stroke="#808080" stroke-width="1.6" stroke-dasharray="7 5.6"/>
<line x1="1069.7" y1="681.6" x2="1069.7" y2="836.6" stroke="#808080" stroke-width="1.6" stroke-dasharray="7 5.6"/>
<line x1="1139.2" y1="681.6" x2="1139.2" y2="836.6" stroke="#808080" stroke-width="1.6" stroke-dasharray="7 5.6"/>
<line x1="1208.7" y1="681.6" x2="1208.7" y2="836.6" stroke="#808080" stroke-width="1.6" stroke-dasharray="7 5.6"/>
<line x1="582" y1="668.6" x2="582" y2="836.6" stroke="#707070" stroke-width="2"/>
<line x1="578" y1="836.6" x2="1256" y2="836.6" stroke="#707070" stroke-width="2"/>
<path d="M582 662.6L586.5 671.6L577.5 671.6Z" fill="#707070"/>
<text x="575" y="686.1" text-anchor="end" font-family="Liberation Serif" font-size="13.5" fill="#555" textLength="14.6" lengthAdjust="spacing">10</text>
<text x="575" y="717.1" text-anchor="end" font-family="Liberation Serif" font-size="13.5" fill="#555" textLength="7.3" lengthAdjust="spacing">8</text>
<text x="575" y="748.1" text-anchor="end" font-family="Liberation Serif" font-size="13.5" fill="#555" textLength="7.3" lengthAdjust="spacing">6</text>
<text x="575" y="779.1" text-anchor="end" font-family="Liberation Serif" font-size="13.5" fill="#555" textLength="7.3" lengthAdjust="spacing">4</text>
<text x="575" y="810.1" text-anchor="end" font-family="Liberation Serif" font-size="13.5" fill="#555" textLength="7.3" lengthAdjust="spacing">2</text>
<text x="575" y="841.1" text-anchor="end" font-family="Liberation Serif" font-size="13.5" fill="#555" textLength="7.3" lengthAdjust="spacing">0</text>
<polyline points="583.2,738.5 606.4,817.0 629.5,784.0 652.7,751.6 675.9,759.0 699.1,745.0 722.2,780.6 745.4,707.7 768.6,791.0 791.7,770.9 814.9,736.2 838.1,703.7 861.2,803.9 884.4,756.7 907.6,786.3 930.8,805.5 953.9,785.7 977.1,810.5 1000.3,747.4 1023.4,796.1 1046.6,753.4 1069.8,812.3 1092.9,805.5 1116.1,711.7 1139.3,716.3 1162.5,726.0 1185.6,752.0 1208.8,743.7 1232.0,727.5 1255.1,812.8" fill="none" stroke="#4545ee" stroke-width="1.4"/>
<text x="888" y="262" font-family="Liberation Serif" font-size="13" fill="#555" textLength="60" lengthAdjust="spacingAndGlyphs">T. Rnd. T4</text>
<text x="636" y="268.5" font-family="Liberation Sans" font-size="15" fill="#0000f0">查看批注</text>
<text x="636" y="473.5" font-family="Liberation Sans" font-size="15" fill="#0000f0">查看批注</text>
<path d="M656.3 271 L657.5 271 L702.3 431 L707.3 434 L703.5 451.5 L692.5 439 L694.1 431 Z" fill="#f52828"/>
</svg>
<!--/DA-->

<!-- POPUP -->
<!--POP-->
<div class="a" style="left:696px;top:451px;width:498px;height:378px;background:#f0f0f0;border:1px solid #6e6e6e;box-shadow:0 5px 18px rgba(0,0,0,.33)"></div>
<div class="a" style="left:697px;top:452px;width:496px;height:38px;background:#fff"></div>
<svg class="a" style="left:708px;top:461px" width="18" height="18" viewBox="0 0 18 18"><rect x="0.5" y="0.5" width="17" height="17" fill="#e8eef0" stroke="#b8c4c8"/><rect x="2" y="6" width="5" height="7" fill="#c02828"/><rect x="9" y="2" width="7" height="7" fill="#f0d030"/><rect x="9" y="10" width="7" height="6" fill="#4a7ee0"/><rect x="2" y="14" width="5" height="2" fill="#fff"/></svg>
<div class="a" style="left:732px;top:461px;font-size:15px;line-height:18px;color:#000;white-space:nowrap">备注信息</div>
<div class="a" style="left:1040px;top:470px;width:12px;height:1px;background:#000"></div>
<div class="a" style="left:1098px;top:465px;width:12px;height:12px;border:1px solid #000"></div>
<svg class="a" style="left:1157px;top:465px" width="13" height="13"><path d="M0.5 0.5L12 12M12 0.5L0.5 12" stroke="#000" stroke-width="1"/></svg>
<div class="a" style="left:702px;top:500px;width:490px;height:323px;background:#fff;border:1px solid #828282"></div>
<div class="a" style="left:804px;top:502px;width:1px;height:24px;background:#e5e5e5"></div>
<div class="a" style="left:891px;top:502px;width:1px;height:24px;background:#e5e5e5"></div>
<div class="a" style="left:965px;top:502px;width:1px;height:24px;background:#e5e5e5"></div>
<div class="a" style="left:1153px;top:502px;width:1px;height:24px;background:#e5e5e5"></div>
<div class="a" style="left:711px;top:510px;font-size:15px;line-height:18px;white-space:nowrap">日期</div>
<div class="a" style="left:809px;top:510px;font-size:15px;line-height:18px;white-space:nowrap">时间</div>
<div class="a" style="left:897px;top:510px;font-size:15px;line-height:18px;white-space:nowrap">数值</div>
<div class="a" style="left:973px;top:510px;font-size:15px;line-height:18px;white-space:nowrap">拐点信息</div>
<svg class="a" style="left:702px;top:500px" width="490" height="140" viewBox="702 500 490 140">
<text x="711.5" y="547.5" font-family="Liberation Mono" font-size="14" textLength="74" lengthAdjust="spacingAndGlyphs">2019-05-27</text>
<text x="811.5" y="547.5" font-family="Liberation Mono" font-size="14" textLength="59" lengthAdjust="spacingAndGlyphs">12:29:00</text>
<text x="898.5" y="547.5" font-family="Liberation Mono" font-size="14" textLength="22" lengthAdjust="spacingAndGlyphs">100</text>
<text x="711.5" y="567.5" font-family="Liberation Mono" font-size="14" textLength="74" lengthAdjust="spacingAndGlyphs">2019-05-27</text>
<text x="811.5" y="567.5" font-family="Liberation Mono" font-size="14" textLength="59" lengthAdjust="spacingAndGlyphs">12:39:00</text>
<text x="898.5" y="567.5" font-family="Liberation Mono" font-size="14" textLength="29" lengthAdjust="spacingAndGlyphs">16.2</text>
<text x="711.5" y="587.5" font-family="Liberation Mono" font-size="14" textLength="74" lengthAdjust="spacingAndGlyphs">2019-05-27</text>
<text x="811.5" y="587.5" font-family="Liberation Mono" font-size="14" textLength="59" lengthAdjust="spacingAndGlyphs">12:40:00</text>
<text x="898.5" y="587.5" font-family="Liberation Mono" font-size="14" textLength="22" lengthAdjust="spacingAndGlyphs">100</text>
<text x="711.5" y="607.5" font-family="Liberation Mono" font-size="14" textLength="74" lengthAdjust="spacingAndGlyphs">2019-05-27</text>
<text x="811.5" y="607.5" font-family="Liberation Mono" font-size="14" textLength="59" lengthAdjust="spacingAndGlyphs">12:50:00</text>
<text x="898.5" y="607.5" font-family="Liberation Mono" font-size="14" textLength="29" lengthAdjust="spacingAndGlyphs">27.1</text>
</svg>
<div class="a" style="left:974px;top:534px;font-size:15px;line-height:18px;white-space:nowrap">氧超标，温度快速上升</div>
<div class="a" style="left:974px;top:554px;font-size:15px;line-height:18px;white-space:nowrap">送氧机故障，温度回落</div>
<div class="a" style="left:974px;top:574px;font-size:15px;line-height:18px;white-space:nowrap">拉风过大，温度上升</div>
<div class="a" style="left:974px;top:594px;font-size:15px;line-height:18px;white-space:nowrap">送氧机故障，温度回落</div>
<div class="a" style="left:709px;top:533px;width:86px;height:20px;border:1px dotted #333"></div>
<div class="a" style="left:1181px;top:822px;width:9px;height:2px;border-top:2px dotted #b0b0b0"></div>
<!--/POP-->

<!-- STATUS BAR -->
<!--STATUS-->
<div class="a" style="left:0;top:929px;width:155px;height:9px;background:#f0f0f0"></div>
<div class="a" style="left:0;top:937px;width:1604px;height:2px;background:#6a6a6a"></div>
<div class="a" style="left:0;top:939px;width:1604px;height:22px;background:#f0f0f0"></div>
<div class="a" style="left:-1px;top:943px;font-size:15px;line-height:18px;color:#222">Ready</div>
<div class="a" style="left:967px;top:942px;width:406px;height:20px;border-top:1px solid #a0a0a0;border-left:1px solid #a0a0a0;border-right:1px solid #fff"></div>
<div class="a" style="left:1376px;top:942px;width:114px;height:20px;border-top:1px solid #a0a0a0;border-left:1px solid #a0a0a0;border-right:1px solid #fff"></div>
<div class="a" style="left:1493px;top:942px;width:87px;height:20px;border-top:1px solid #a0a0a0;border-left:1px solid #a0a0a0;border-right:1px solid #fff"></div>
<div class="a" style="left:1379px;top:943px;font-size:15px;line-height:18px;color:#222">s:0</div>
<svg class="a" style="left:1584px;top:944px" width="17" height="17"><path d="M16 3L3 16M16 8L8 16M16 13L13 16" stroke="#a0a0a0" stroke-width="1.5"/></svg>
<!--/STATUS-->

</body></html>
